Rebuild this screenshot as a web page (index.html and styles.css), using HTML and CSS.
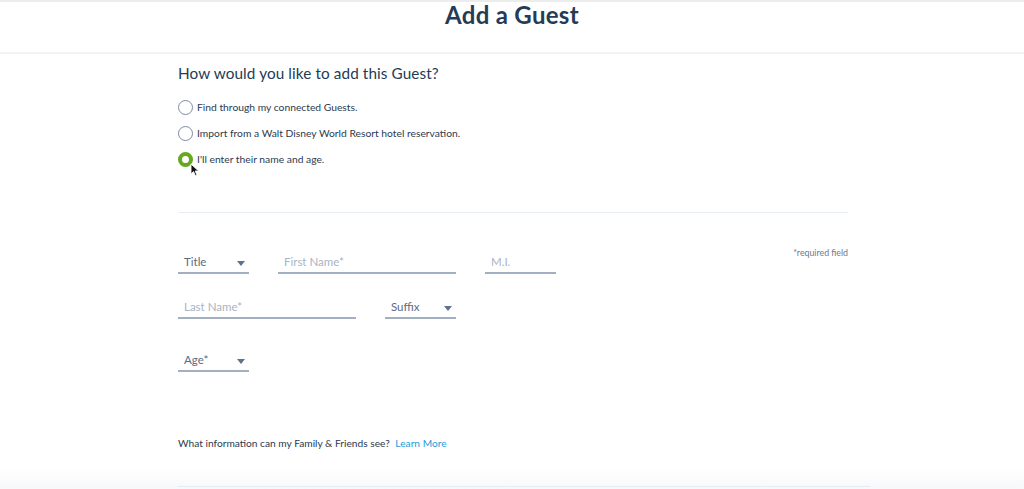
FILE: index.html
```html
<!DOCTYPE html>
<html lang="en">
<head>
<meta charset="utf-8">
<title>Add a Guest</title>
<link rel="stylesheet" href="styles.css">
</head>
<body>
<header class="page-header">
  <h1 class="page-title">Add a Guest</h1>
</header>
<main class="content">
  <h2 class="question">How would you like to add this Guest?</h2>
  <div class="options">
    <label class="option"><span class="radio"></span><span>Find through my connected Guests.</span></label>
    <label class="option"><span class="radio"></span><span>Import from a Walt Disney World Resort hotel reservation.</span></label>
    <label class="option selected"><span class="radio on"></span><span>I'll enter their name and age.</span>
      <svg class="cursor" width="10" height="14" viewBox="0 0 10 14"><path d="M1 1 L1 11 L3.5 8.6 L5.4 12.8 L7 12.1 L5.2 8 L8.6 8 Z" fill="#111" stroke="#fff" stroke-width="0.9"/></svg>
    </label>
  </div>
  <hr class="divider">
  <div class="form">
    <div class="req">*required field</div>
    <div class="row">
      <div class="field select w-sm"><span class="val">Title</span><span class="caret"></span></div>
      <div class="field w-lg"><span class="ph">First Name*</span></div>
      <div class="field w-sm"><span class="ph">M.I.</span></div>
    </div>
    <div class="row">
      <div class="field w-lg"><span class="ph">Last Name*</span></div>
      <div class="field select w-sm"><span class="val">Suffix</span><span class="caret"></span></div>
    </div>
    <div class="row row-age">
      <div class="field select w-sm"><span class="val">Age*</span><span class="caret"></span></div>
    </div>
  </div>
  <p class="info">What information can my Family &amp; Friends see? <a class="link" href="#">Learn More</a></p>
</main>
<div class="bottom-shade"><div class="bottom-line"></div></div>
</body>
</html>
```
FILE: styles.css
```css
* { box-sizing: border-box; }
html, body { margin: 0; padding: 0; }
body {
  background: #fff;
  font-family: Lato, "Noto Sans", "Liberation Sans", sans-serif;
  color: #253b56;
  width: 1024px;
  height: 489px;
  overflow: hidden;
  position: relative;
}
.page-header {
  border-top: 2px solid #ececec;
  border-bottom: 2px solid #f1f3f6;
  height: 54px;
  display: flex;
  justify-content: center;
}
.page-title {
  margin: 0;
  font-size: 24px;
  font-weight: 700;
  line-height: 26px;
  color: #253b56;
  letter-spacing: 0.3px;
}
.content {
  width: 670px;
  margin-left: 178px;
}
.question {
  margin: 9px 0 0;
  font-size: 15.3px;
  font-weight: 400;
  line-height: 20px;
  color: #253b56;
  letter-spacing: 0.1px;
}
.options {
  margin-top: 16px;
  display: flex;
  flex-direction: column;
  gap: 10px;
}
.option {
  display: flex;
  align-items: center;
  gap: 4px;
  height: 16px;
  font-size: 10.3px;
  color: #2b3a4f;
  position: relative;
}
.radio {
  width: 15px;
  height: 15px;
  border-radius: 50%;
  border: 1.5px solid #7d8ba0;
  flex: none;
}
.radio.on {
  border: 4.5px solid #67a81f;
  background: #fff;
}
.cursor {
  position: absolute;
  left: 12px;
  top: 12px;
}
.divider {
  margin: 45px 0 0;
  border: 0;
  border-top: 1px solid #e8eef4;
}
.form {
  position: relative;
  padding-top: 38px;
}
.req {
  position: absolute;
  right: 0;
  top: 34px;
  font-size: 8.8px;
  color: #6b7a8f;
}
.row {
  display: flex;
  gap: 29px;
  margin-bottom: 22px;
}
.row-age { margin-top: 30px; }
.field {
  height: 23px;
  border-bottom: 2px solid #a3b0c2;
  display: flex;
  align-items: center;
  justify-content: space-between;
  padding: 0 4px 0 6px;
  font-size: 11.5px;
}
.w-sm { width: 71px; }
.w-lg { width: 178px; }
.val { color: #5c6b80; }
.ph { color: #a9b4c4; }
.caret {
  width: 0;
  height: 0;
  border-left: 4.5px solid transparent;
  border-right: 4.5px solid transparent;
  border-top: 5px solid #5f7090;
  margin-top: 3px;
}
.info {
  margin: 65px 0 0;
  font-size: 10.2px;
  color: #2b3a4f;
}
.link {
  color: #1e9bd7;
  text-decoration: none;
  margin-left: 3px;
}
.bottom-shade {
  position: absolute;
  left: 0;
  right: 0;
  bottom: 0;
  height: 22px;
  background: linear-gradient(#ffffff, #f7f8fa);
}
.bottom-line {
  position: absolute;
  left: 178px;
  width: 692px;
  bottom: 2px;
  border-top: 1px solid #e6ecf3;
}
```
